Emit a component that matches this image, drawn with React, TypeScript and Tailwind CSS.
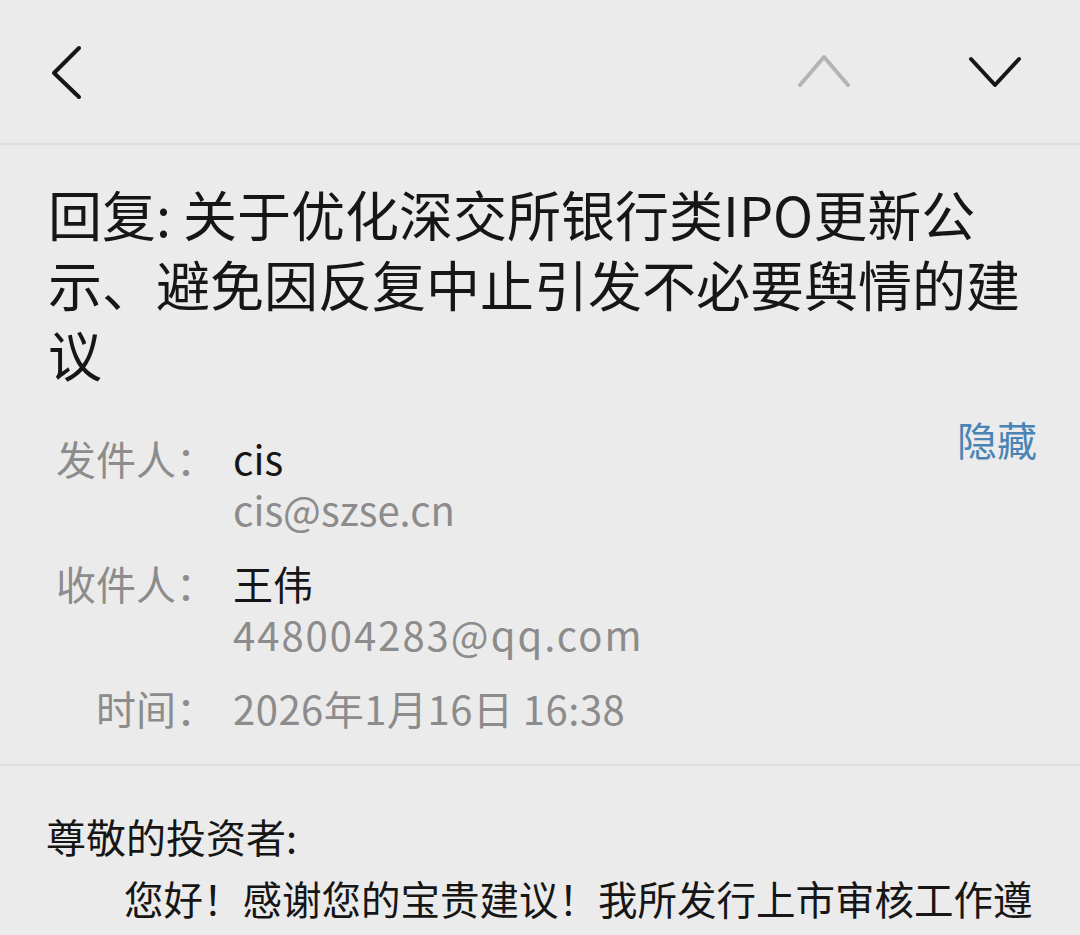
import React from "react";

const font = { fontFamily: '"Noto Sans CJK SC", "Noto Sans", sans-serif' };

function Chevron({ d, color }: { d: string; color: string }) {
  return (
    <svg width="60" height="60" viewBox="0 0 60 60" fill="none">
      <path d={d} stroke={color} strokeWidth="4" strokeLinecap="round" strokeLinejoin="round" />
    </svg>
  );
}

export default function App() {
  return (
    <div className="w-[1080px] h-[935px] overflow-hidden bg-[#ebebeb] text-[#161616]" style={font}>
      {/* Header */}
      <div className="h-[145px] border-b-2 border-[#dedede] flex items-center justify-between pl-[37px] pr-[55px]">
        <Chevron d="M42 6 L17 31 L42 55" color="#161616" />
        <div className="flex items-center gap-[110px]">
          <Chevron d="M5 43 L29 15 L53 43" color="#b4b4b4" />
          <Chevron d="M6 17 L30 43 L54 17" color="#161616" />
        </div>
      </div>

      {/* Title */}
      <div className="pl-[48px] pr-[32px] pt-[34px] text-[54px] leading-[70px] text-[#161616]">
        回复: 关于优化深交所银行类IPO更新公示、避免因反复中止引发不必要舆情的建议
      </div>

      {/* Meta */}
      <div className="flex justify-between pr-[43px] pb-[30px] border-b-2 border-[#dedede]">
        <div className="mt-[44px] grid grid-cols-[216px_1fr] gap-x-[17px] gap-y-[23px] text-[40px] leading-[51px]">
          <div className="text-right text-[#8c8c8c]">发件人：</div>
          <div>
            <div className="text-[#161616]">cis</div>
            <div className="text-[#8c8c8c]">cis@szse.cn</div>
          </div>
          <div className="text-right text-[#8c8c8c]">收件人：</div>
          <div>
            <div className="text-[#161616]">王伟</div>
            <div className="text-[#8c8c8c] tracking-[2px]">448004283@qq.com</div>
          </div>
          <div className="text-right text-[#8c8c8c]">时间：</div>
          <div className="text-[#8c8c8c] tracking-[0.5px]">2026年1月16日 16:38</div>
        </div>
        <div className="pt-[25px] text-[40px] leading-[50px] text-[#4a84b5]">隐藏</div>
      </div>

      {/* Body */}
      <div className="pl-[46px] pr-[40px] pt-[39px] text-[40px] leading-[62px] text-[#161616]">
        <div>尊敬的投资者:</div>
        <div className="pl-[78px] text-[39.5px] whitespace-nowrap">您好！感谢您的宝贵建议！我所发行上市审核工作遵</div>
      </div>
    </div>
  );
}
